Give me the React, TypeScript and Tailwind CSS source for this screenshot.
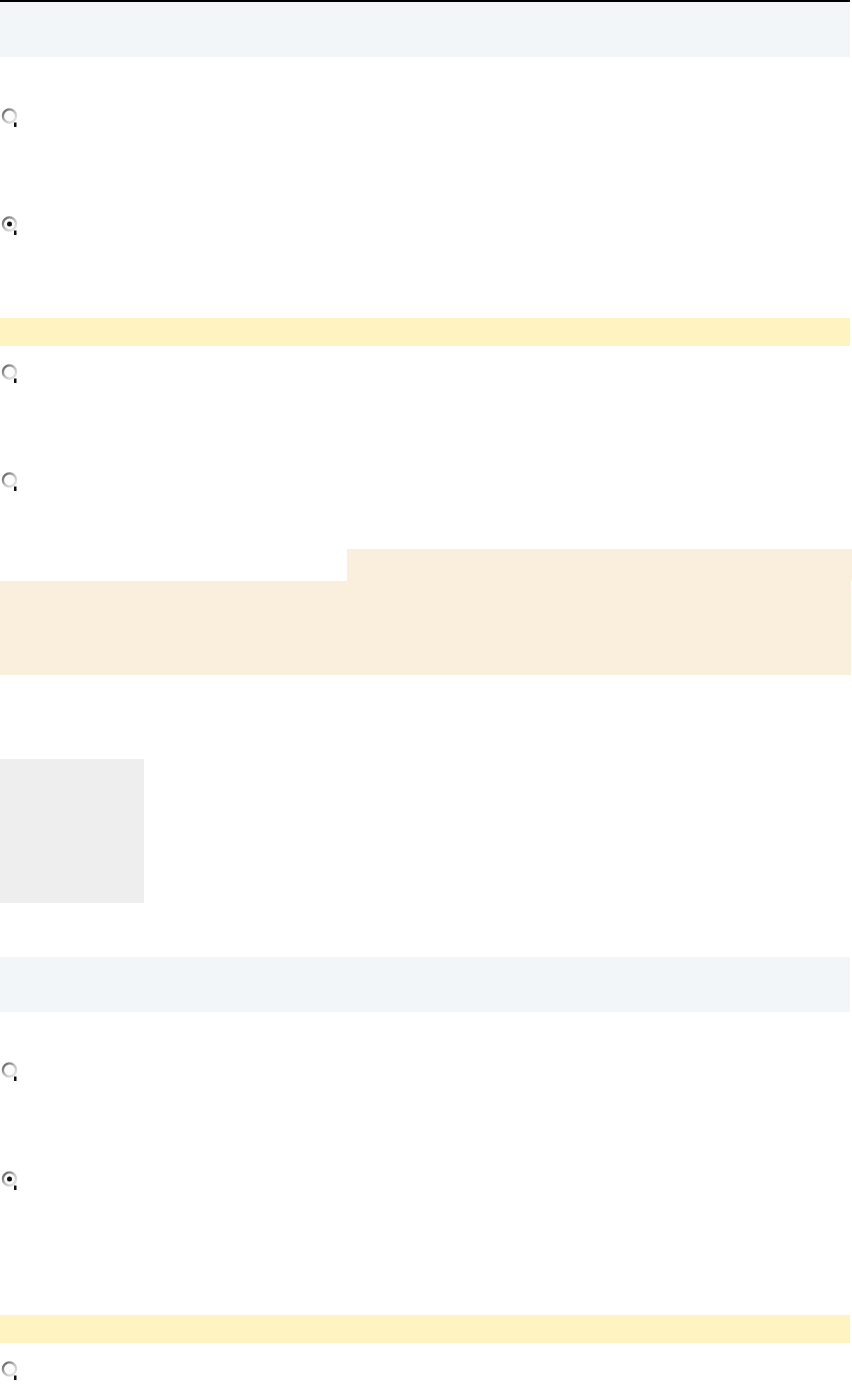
import React from "react";

type RadioProps = { checked?: boolean };

function Radio({ checked = false }: RadioProps) {
  return (
    <svg width="19" height="22" viewBox="0 0 19 22" className="block ml-[1px]">
      <defs>
        <linearGradient id="ring" x1="0" y1="0" x2="1" y2="1">
          <stop offset="0" stopColor="#555555" />
          <stop offset="0.5" stopColor="#bdbdbd" />
          <stop offset="1" stopColor="#efefef" />
        </linearGradient>
      </defs>
      <circle cx="8.5" cy="8" r="6.6" fill="#fcfcfc" stroke="url(#ring)" strokeWidth="2.3" />
      {checked && <circle cx="8.5" cy="8" r="2.5" fill="#111111" />}
      <rect x="13" y="14.5" width="2.5" height="4.5" fill="#111111" />
    </svg>
  );
}

export default function App() {
  return (
    <div className="w-[850px] bg-white font-['Liberation_Sans',sans-serif]">
      <div className="h-[2px] bg-black" />
      <div className="h-[55px] bg-[#f2f6f9]" />

      <div className="pt-[51px]">
        <Radio />
      </div>
      <div className="pt-[86px]">
        <Radio checked />
      </div>

      <div className="mt-[80px] h-[28px] bg-[#fff3c2]" />

      <div className="pt-[18px]">
        <Radio />
      </div>
      <div className="pt-[86px]">
        <Radio />
      </div>

      <div className="mt-[55px]">
        <div className="ml-[347px] h-[32px] w-[505px] bg-[#faeedc]" />
        <div className="h-[94px] w-[851px] bg-[#faeedc]" />
      </div>

      <div className="mt-[84px] h-[144px] w-[144px] bg-[#eeeeee]" />

      <div className="mt-[54px] h-[55px] bg-[#f2f6f9]" />

      <div className="pt-[50px]">
        <Radio />
      </div>
      <div className="pt-[87px]">
        <Radio checked />
      </div>

      <div className="mt-[122px] h-[28px] bg-[#fff3c2]" />

      <div className="pt-[18px] pb-[20px]">
        <Radio />
      </div>
    </div>
  );
}
